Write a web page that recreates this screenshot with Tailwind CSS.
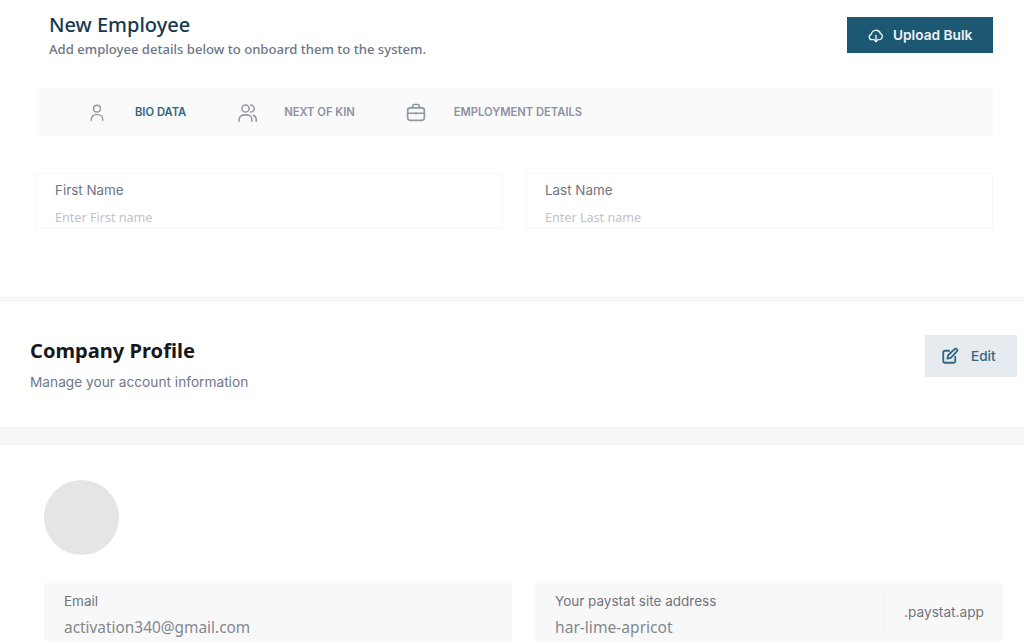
<!DOCTYPE html>
<html lang="en">
<head>
<meta charset="utf-8">
<title>New Employee</title>
<script src="https://cdn.jsdelivr.net/npm/@tailwindcss/browser@4"></script>
</head>
<body class="bg-white overflow-hidden font-['Inter',sans-serif]">
<div class="w-[1024px] h-[643px] overflow-hidden flex flex-col">
  <section class="h-[297px] shrink-0 pl-[36px] pr-[31px] pt-[17px]">
    <div class="flex justify-between items-start pl-[13px]">
      <div class="font-['Noto_Sans',sans-serif]">
        <h1 class="text-[20px] leading-[18px] font-medium text-[#16384c] -mt-px">New Employee</h1>
        <p class="mt-[6px] text-[13.1px] leading-[18px] font-medium text-[#6b7686]">Add employee details below to onboard them to the system.</p>
      </div>
      <button class="w-[146px] h-[36px] bg-[#1d5872] text-[#eef3f6] text-[13.7px] font-semibold flex items-center pl-[21px] gap-[9px]">
        <svg class="w-[16px] h-[16px] mt-[2px]" viewBox="0 0 24 24" fill="none" stroke="currentColor" stroke-width="2" stroke-linecap="round" stroke-linejoin="round"><path d="M6.5 17.5H6a4 4 0 0 1-1-7.9 7 7 0 0 1 13.6-1.4A5 5 0 0 1 18 17.5h-.5"/><path d="M12 11v9"/><path d="m8.5 17 3.5 3.5 3.5-3.5"/></svg>
        Upload Bulk
      </button>
    </div>
    <nav class="mt-[30px] h-[48px] bg-[#fafafa] flex items-center pl-[52px] text-[11.2px] font-semibold text-[#8a92a3]">
      <svg class="w-[18px] h-[18px] mr-[29px] text-[#8f96a6]" viewBox="0 0 24 24" fill="none" stroke="currentColor" stroke-width="1.9" stroke-linecap="round"><circle cx="12" cy="7.5" r="4.5"/><path d="M4.5 23v-1.5a6 6 0 0 1 6-6h3a6 6 0 0 1 6 6V23"/></svg>
      <span class="text-[#2f6680]">BIO DATA</span>
      <svg class="w-[19px] h-[19px] ml-[52px] mr-[27px] text-[#8f96a6]" viewBox="0 0 24 24" fill="none" stroke="currentColor" stroke-width="1.9" stroke-linecap="round"><circle cx="9.5" cy="7" r="4.5"/><path d="M1.5 23v-2a6 6 0 0 1 6-6h4a6 6 0 0 1 6 6v2"/><path d="M16 2.5a4.5 4.5 0 0 1 0 9"/><path d="M19.5 15.5a6 6 0 0 1 3.5 5.5v2"/></svg>
      <span>NEXT OF KIN</span>
      <svg class="w-[20px] h-[20px] ml-[51px] mr-[28px] text-[#8f96a6]" viewBox="0 0 24 24" fill="none" stroke="currentColor" stroke-width="2" stroke-linecap="round" stroke-linejoin="round"><rect x="2" y="7" width="20" height="15" rx="3"/><path d="M8 7V5a2 2 0 0 1 2-2h4a2 2 0 0 1 2 2v2"/><path d="M2 13.5h20"/><path d="M12 13v1.5"/></svg>
      <span>EMPLOYMENT DETAILS</span>
    </nav>
    <div class="mt-[37px] grid grid-cols-[467px_467px] gap-[23px] w-[957px]">
      <div class="h-[56px] border border-[#f5f6f7] pl-[18px] pt-[7px]">
        <label class="block text-[13.4px] leading-[18px] text-[#6f7480]">First Name</label>
        <div class="mt-[10px] text-[12.6px] leading-[18px] text-[#bfc3cc] font-['Noto_Sans',sans-serif]">Enter First name</div>
      </div>
      <div class="h-[56px] border border-[#f5f6f7] pl-[18px] pt-[7px]">
        <label class="block text-[13.4px] leading-[18px] text-[#6f7480]">Last Name</label>
        <div class="mt-[10px] text-[12.6px] leading-[18px] text-[#bfc3cc] font-['Noto_Sans',sans-serif]">Enter Last name</div>
      </div>
    </div>
  </section>
  <div class="h-[5px] shrink-0 bg-[#f7f7f7]"></div>
  <section class="h-[125px] shrink-0 pl-[30px] pr-[7px] pt-[33px] flex justify-between items-start">
    <div>
      <h2 class="mt-[3px] text-[20.1px] leading-[26px] font-bold text-[#17181c] font-['Noto_Sans',sans-serif]">Company Profile</h2>
      <p class="mt-[9px] text-[13.7px] leading-[18px] text-[#6f7888]">Manage your account information</p>
    </div>
    <button class="w-[92px] h-[42px] bg-[#e6ebf0] text-[#2f6680] text-[13.5px] font-medium flex items-center pl-[16px] gap-[12px]">
      <svg class="w-[18px] h-[18px]" viewBox="0 0 24 24" fill="none" stroke="currentColor" stroke-width="2.4" stroke-linecap="round" stroke-linejoin="round"><path d="M11 5H5a2 2 0 0 0-2 2v12a2 2 0 0 0 2 2h12a2 2 0 0 0 2-2v-6"/><path d="M8.5 15.5 9.5 11 18.5 2.5a2.2 2.2 0 0 1 3 3L13 14.5z"/></svg>
      Edit
    </button>
  </section>
  <div class="h-[18px] shrink-0 bg-[#f7f7f7]"></div>
  <section class="flex-1 pl-[44px] pr-[21px] pt-[35px]">
    <div class="w-[75px] h-[75px] rounded-full bg-[#e5e5e5]"></div>
    <div class="mt-[28px] grid grid-cols-[468px_468px] gap-[23px]">
      <div class="h-[58px] overflow-hidden bg-[#f8f8f8] pl-[20px] pt-[9px]">
        <label class="block text-[13.5px] leading-[18px] text-[#70757f]">Email</label>
        <div class="mt-[7px] text-[15.4px] leading-[22px] text-[#83878f] font-['Noto_Sans',sans-serif]">activation340@gmail.com</div>
      </div>
      <div class="h-[58px] overflow-hidden bg-[#f8f8f8] pl-[20px] pt-[9px] flex">
        <div class="flex-1">
          <label class="block text-[13.5px] leading-[18px] text-[#70757f]">Your paystat site address</label>
          <div class="mt-[6px] text-[15.6px] leading-[22px] text-[#83878f] font-['Noto_Sans',sans-serif]">har-lime-apricot</div>
        </div>
        <div class="w-[119px] h-[40px] border-l border-[#f0f0f0] pl-[19px] pt-[11px] text-[13.7px] leading-[18px] text-[#70757f]">.paystat.app</div>
      </div>
    </div>
  </section>
</div>
</body>
</html>
